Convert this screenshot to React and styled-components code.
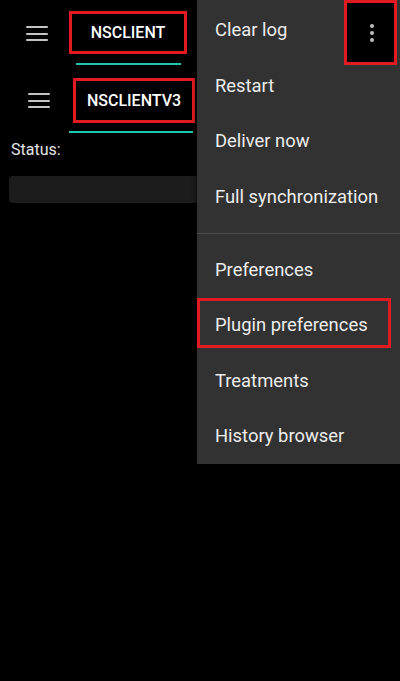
import React from 'react';
import { styled, createGlobalStyle } from 'styled-components';

const GlobalStyle = createGlobalStyle`
  html, body {
    margin: 0;
    padding: 0;
    background-color: #000;
  }
  body {
    font-family: Roboto, "Noto Sans", "Liberation Sans", sans-serif;
  }
`;

const Screen = styled.div`
  position: relative;
  width: 400px;
  height: 681px;
  overflow: hidden;
  background-color: #000;
`;

const Toolbar = styled.div`
  display: flex;
  align-items: flex-start;
  padding-top: ${(p) => p.$top}px;
  padding-left: ${(p) => p.$left}px;
`;

const Burger = styled.div`
  display: flex;
  flex-direction: column;
  gap: ${(p) => p.$gap}px;
  width: 22px;
  margin-top: ${(p) => p.$offset}px;
  span {
    display: block;
    height: 2px;
    background-color: #c4c4c4;
    border-radius: 1px;
  }
`;

const Tab = styled.div`
  display: flex;
  flex-direction: column;
  margin-left: ${(p) => p.$gap}px;
`;

const TabLabel = styled.div`
  display: flex;
  justify-content: center;
  align-items: center;
  box-sizing: border-box;
  width: ${(p) => p.$w}px;
  height: ${(p) => p.$h}px;
  border: 3px solid #e21b23;
  color: #fff;
  font-size: 16px;
  font-weight: 500;
`;

const Underline = styled.div`
  height: 2px;
  background-color: #1fc7b2;
  width: ${(p) => p.$w}px;
  margin-top: ${(p) => p.$mt}px;
  margin-left: ${(p) => p.$ml}px;
`;

const Status = styled.div`
  margin: 7px 0 0 11px;
  color: #e6e6e6;
  font-size: 16px;
  line-height: 19px;
`;

const LogBar = styled.div`
  margin: 17px 0 0 9px;
  height: 27px;
  width: 400px;
  border-radius: 4px;
  background-color: #1c1c1c;
`;

const Menu = styled.div`
  position: absolute;
  top: 0;
  right: 0;
  width: 203px;
  padding-top: 2px;
  background-color: #323232;
  box-shadow: -1px 1px 4px rgba(0, 0, 0, 0.6);
`;

const Item = styled.div`
  position: relative;
  display: flex;
  align-items: center;
  height: 55.5px;
  padding-left: 18px;
  color: #ececec;
  font-size: 18.4px;
`;

const Highlight = styled.span`
  position: absolute;
  left: 0;
  right: 9px;
  top: 1px;
  bottom: 5px;
  border: 3px solid #e21b23;
`;

const Divider = styled.div`
  height: 1px;
  margin: 8.5px 0 8px;
  background-color: #4a4a4a;
`;

const Kebab = styled.div`
  position: absolute;
  top: 0;
  left: 344px;
  width: 53px;
  height: 65px;
  box-sizing: border-box;
  border: 3px solid #e21b23;
  background-color: #000;
  display: flex;
  flex-direction: column;
  align-items: center;
  justify-content: center;
  gap: 3px;
  padding-left: 3px;
  span {
    width: 4px;
    height: 4px;
    border-radius: 50%;
    background-color: #bdbdbd;
  }
`;

const menuGroups = [
  ['Clear log', 'Restart', 'Deliver now', 'Full synchronization'],
  ['Preferences', 'Plugin preferences', 'Treatments', 'History browser'],
];

const App = () => {
  return (
    <Screen>
      <GlobalStyle />
      <Toolbar $top={11} $left={26}>
        <Burger $gap={4.5} $offset={15}>
          <span /><span /><span />
        </Burger>
        <Tab $gap={21}>
          <TabLabel $w={118} $h={43}>NSCLIENT</TabLabel>
          <Underline $w={105} $mt={9} $ml={7} />
        </Tab>
      </Toolbar>
      <Toolbar $top={13} $left={28}>
        <Burger $gap={4.5} $offset={15}>
          <span /><span /><span />
        </Burger>
        <Tab $gap={23}>
          <TabLabel $w={122} $h={45}>NSCLIENTV3</TabLabel>
          <Underline $w={124} $mt={8} $ml={-4} />
        </Tab>
      </Toolbar>
      <Status>Status:</Status>
      <LogBar />

      <Menu>
        {menuGroups.map((group, gi) => (
          <React.Fragment key={gi}>
            {gi > 0 && <Divider />}
            {group.map((label) => (
              <Item key={label}>
                {label === 'Plugin preferences' && <Highlight />}
                {label}
              </Item>
            ))}
          </React.Fragment>
        ))}
      </Menu>
      <Kebab>
        <span /><span /><span />
      </Kebab>
    </Screen>
  );
};

export default App;
